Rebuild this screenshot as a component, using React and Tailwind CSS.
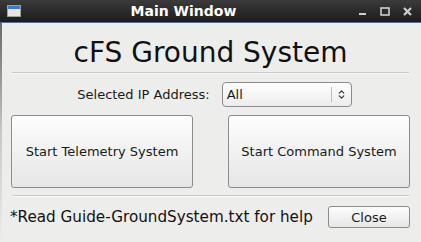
import { ChevronsUpDown } from 'lucide-react';

const FONT = { fontFamily: '"DejaVu Sans", "Liberation Sans", sans-serif' };

// --- Barra titolo finestra ---
function TitleBar() {
  return (
    <div className="h-[23px] shrink-0 flex items-center bg-gradient-to-b from-[#3b3b3b] to-[#1c1c1c] border-b border-[#56708c]">
      <div className="ml-[7px] w-[14px] h-[12px] border border-[#9aa0a8] bg-[#e4e6e8] flex flex-col">
        <div className="h-[3px] bg-[#3f78d0]" />
      </div>
      <div className="flex-1 text-center text-white font-bold text-[14px] leading-none pr-[13px]">Main Window</div>
      <div className="flex items-center gap-[13px] mr-[9px]">
        <svg width="8" height="8" viewBox="0 0 8 8"><rect x="0" y="6" width="7" height="2" fill="#cfcfcf" /></svg>
        <svg width="10" height="9" viewBox="0 0 10 9"><rect x="1" y="1" width="8" height="7" fill="none" stroke="#cfcfcf" strokeWidth="1.6" /></svg>
        <svg width="9" height="9" viewBox="0 0 9 9"><path d="M1 1 L8 8 M8 1 L1 8" stroke="#cfcfcf" strokeWidth="2.2" /></svg>
      </div>
    </div>
  );
}

function Separator() {
  return <div className="mx-[10px] border-t border-[#c9c9c9] border-b border-b-[#fafafa]" />;
}

function BigButton({ children }) {
  return (
    <button className="w-[182px] h-[73px] rounded-[3px] border border-[#8c8c8c] bg-gradient-to-b from-[#fdfdfd] to-[#e6e6e6] text-[13px] text-[#1a1a1a]">
      {children}
    </button>
  );
}

export default function App() {
  return (
    <div className="w-[421px] h-[242px] flex flex-col bg-[#ededec] overflow-hidden" style={FONT}>
      <TitleBar />
      <div className="flex-1 flex">
        <div className="w-[2px] bg-gradient-to-b from-[#6a6a6a] via-[#c8c8c8] to-[#ededec]" />
        <div className="flex-1 flex flex-col pr-[2px]">
          {/* Titolo */}
          <div className="h-[49px] flex items-end justify-center pb-[5px]">
            <span className="text-[28px] leading-none text-[#111]">cFS Ground System</span>
          </div>
          <Separator />

          {/* Selettore IP */}
          <div className="mt-[8px] h-[25px] flex items-center justify-center gap-[12px] pl-[8px]">
            <span className="text-[13px] text-[#1a1a1a]">Selected IP Address:</span>
            <div className="w-[130px] h-[25px] rounded-[4px] border border-[#8c8c8c] bg-gradient-to-b from-[#ffffff] to-[#ececec] flex items-center text-[13px] text-[#1a1a1a]">
              <span className="flex-1 pl-[4px]">All</span>
              <div className="w-px h-[15px] bg-[#bdbdbd]" />
              <ChevronsUpDown size={11} strokeWidth={2.5} className="mx-[4px] text-[#333]" />
            </div>
          </div>

          {/* Pulsanti principali */}
          <div className="mt-[8px] flex justify-between pl-[9px] pr-[9px]">
            <BigButton>Start Telemetry System</BigButton>
            <BigButton>Start Command System</BigButton>
          </div>

          <div className="mt-[7px]"><Separator /></div>

          {/* Footer */}
          <div className="mt-[9px] flex items-center justify-between pl-[8px] pr-[9px]">
            <span className="text-[15.2px] text-[#111]">*Read Guide-GroundSystem.txt for help</span>
            <button className="w-[82px] h-[22px] rounded-[3px] border border-[#8c8c8c] bg-gradient-to-b from-[#fdfdfd] to-[#e6e6e6] text-[13px] text-[#1a1a1a]">
              Close
            </button>
          </div>
        </div>
      </div>
    </div>
  );
}
